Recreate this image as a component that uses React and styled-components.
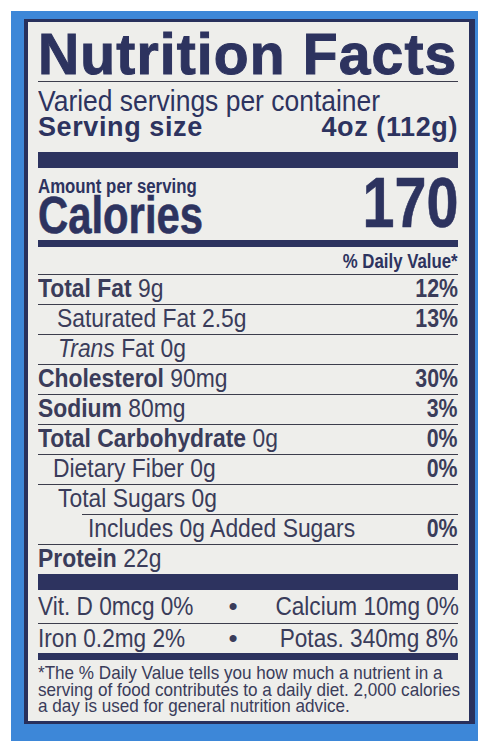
import React from "react";
import styled, { createGlobalStyle } from "styled-components";

const SANS = `"Liberation Sans", Arial, sans-serif`;
const INK = "#2d335f";
const TEXT = "#3a3c5a";
const RULE = "#3c3d4c";

const GlobalStyle = createGlobalStyle`
  html, body {
    margin: 0;
    background: #ffffff;
  }
`;

const Frame = styled.div`
  box-sizing: border-box;
  width: 467px;
  margin: 11px 0 0 11px;
  padding: 8px 3px 17px 13px;
  background: #3d87d8;
`;

const Panel = styled.div`
  background: #eeeeeb;
  border-style: solid;
  border-color: #28305c;
  border-width: 3px 6px 3px 4px;
  padding: 6px 11px 6px 10px;
  color: ${TEXT};
  overflow: hidden;
`;

/* the label face is a condensed grotesque: squeeze Liberation Sans to its width */
const Cond = styled.span`
  display: inline-block;
  transform: scaleX(${(p) => p.$sx});
  transform-origin: ${(p) => p.$origin || "left"} center;
`;

const Title = styled.h1`
  margin: 0;
  height: 53px;
  border-bottom: 1px solid ${RULE};
  font: 700 57px ${SANS};
  line-height: 53px;
  letter-spacing: 1.15px;
  color: ${INK};
  -webkit-text-stroke: 1px ${INK};
  white-space: nowrap;
`;

const Servings = styled.div`
  margin-top: 6px;
  font: 400 29px ${SANS};
  line-height: 27px;
  color: ${INK};
  white-space: nowrap;
`;

const ServingSize = styled.div`
  display: flex;
  justify-content: space-between;
  font: 700 27px ${SANS};
  line-height: 25px;
  letter-spacing: 0.6px;
  color: ${INK};
`;

const Bar = styled.div`
  height: ${(p) => p.$h}px;
  margin-top: ${(p) => p.$mt || 0}px;
  background: ${INK};
`;

const CalBlock = styled.div`
  display: flex;
  justify-content: space-between;
  height: 72px;
  color: ${INK};
`;

const CalLeft = styled.div`
  padding-top: 9px;
  white-space: nowrap;
`;

const Amount = styled.div`
  font: 700 20px ${SANS};
  line-height: 18px;
`;

const Calories = styled.div`
  font: 700 51px ${SANS};
  line-height: 42px;
  -webkit-text-stroke: 0.6px ${INK};
`;

const CalNumber = styled.div`
  padding-top: 5px;
  font: 700 71px ${SANS};
  line-height: 60px;
  -webkit-text-stroke: 0.6px ${INK};
`;

const DvHead = styled.div`
  height: 27px;
  border-bottom: 1px solid ${RULE};
  text-align: right;
  font: 700 21px ${SANS};
  line-height: 27px;
  color: ${INK};
`;

const Row = styled.div`
  display: flex;
  justify-content: space-between;
  height: 29px;
  padding-left: ${(p) => p.$indent || 0}px;
  font: 400 26px ${SANS};
  line-height: 26px;
  white-space: nowrap;
`;

const Label = styled.b`
  font-weight: 700;
`;

const Rule = styled.div`
  height: 1px;
  margin-left: ${(p) => p.$inset || 0}px;
  background: ${RULE};
`;

const VitRow = styled.div`
  display: grid;
  grid-template-columns: 180px 30px 1fr;
  height: ${(p) => p.$h}px;
  font: 400 26px ${SANS};
  line-height: ${(p) => p.$h}px;
  white-space: nowrap;
`;

const Bullet = styled.span`
  text-align: center;
`;

const VitRight = styled.span`
  justify-self: end;
`;

const Footnote = styled.p`
  margin: 0;
  padding-top: 5px;
  font: 400 19px ${SANS};
  line-height: 16.5px;
  white-space: nowrap;
`;

const Line = styled.span`
  display: block;
`;

const nutrients = [
  { label: "Total Fat", amount: " 9g", dv: "12%", bold: true },
  { label: "Saturated Fat", amount: " 2.5g", dv: "13%", indent: 19 },
  { italic: "Trans", label: " Fat", amount: " 0g", indent: 20 },
  { label: "Cholesterol", amount: " 90mg", dv: "30%", bold: true },
  { label: "Sodium", amount: " 80mg", dv: "3%", bold: true },
  { label: "Total Carbohydrate", amount: " 0g", dv: "0%", bold: true },
  { label: "Dietary Fiber", amount: " 0g", dv: "0%", indent: 15 },
  { label: "Total Sugars", amount: " 0g", indent: 20, ruleInset: 44 },
  { label: "Includes 0g Added Sugars", dv: "0%", indent: 50 },
  { label: "Protein", amount: " 22g", bold: true, last: true },
];

function NutrientRow({ item }) {
  return (
    <>
      <Row $indent={item.indent}>
        <Cond $sx={0.88}>
          {item.italic && <i>{item.italic}</i>}
          {item.bold ? <Label>{item.label}</Label> : item.label}
          {item.amount}
        </Cond>
        {item.dv && (
          <Cond $sx={0.82} $origin="right">
            <Label>{item.dv}</Label>
          </Cond>
        )}
      </Row>
      {!item.last && <Rule $inset={item.ruleInset} />}
    </>
  );
}

function VitaminRow({ h, left, right }) {
  return (
    <VitRow $h={h}>
      <span>
        <Cond $sx={0.87}>{left}</Cond>
      </span>
      <Bullet>•</Bullet>
      <VitRight>
        <Cond $sx={0.87} $origin="right">
          {right}
        </Cond>
      </VitRight>
    </VitRow>
  );
}

export default function App() {
  return (
    <>
      <GlobalStyle />
      <Frame>
        <Panel>
          <Title>Nutrition Facts</Title>
          <Servings>
            <Cond $sx={0.912}>Varied servings per container</Cond>
          </Servings>
          <ServingSize>
            <span>Serving size</span>
            <span>4oz (112g)</span>
          </ServingSize>
          <Bar $h={16} $mt={12} />
          <CalBlock>
            <CalLeft>
              <Amount>
                <Cond $sx={0.84}>Amount per serving</Cond>
              </Amount>
              <Calories>
                <Cond $sx={0.82}>Calories</Cond>
              </Calories>
            </CalLeft>
            <CalNumber>
              <Cond $sx={0.81} $origin="right">
                170
              </Cond>
            </CalNumber>
          </CalBlock>
          <Bar $h={7} />
          <DvHead>
            <Cond $sx={0.8} $origin="right">
              % Daily Value*
            </Cond>
          </DvHead>
          {nutrients.map((item) => (
            <NutrientRow key={item.label} item={item} />
          ))}
          <Bar $h={16} />
          <VitaminRow h={33} left="Vit. D 0mcg 0%" right="Calcium 10mg 0%" />
          <Rule />
          <VitaminRow h={29} left="Iron 0.2mg 2%" right="Potas. 340mg 8%" />
          <Bar $h={7} />
          <Footnote>
            <Cond $sx={0.9}>
              <Line>*The % Daily Value tells you how much a nutrient in a</Line>
              <Line>serving of food contributes to a daily diet. 2,000 calories</Line>
              <Line>a day is used for general nutrition advice.</Line>
            </Cond>
          </Footnote>
        </Panel>
      </Frame>
    </>
  );
}
